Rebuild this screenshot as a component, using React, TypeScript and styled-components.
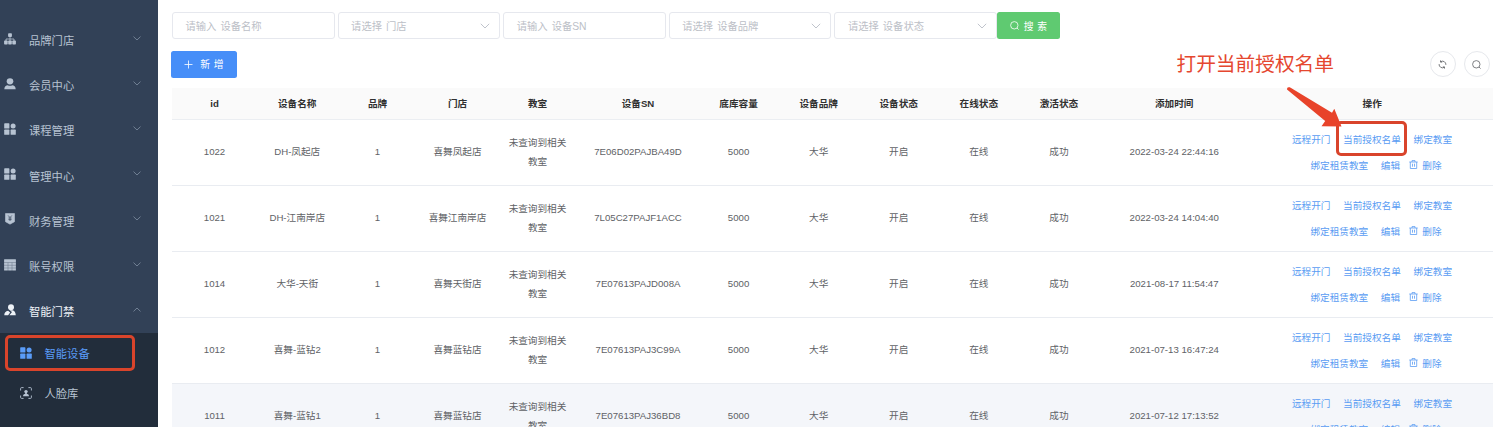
import React from 'react';
import styled, { createGlobalStyle, css } from 'styled-components';

const Global = createGlobalStyle`
  * { box-sizing: border-box; }
  body {
    margin: 0;
    background: #fff;
    overflow: hidden;
    font-family: "Liberation Sans", "Noto Sans CJK SC", sans-serif;
  }
`;

const Page = styled.div`
  position: relative;
  display: flex;
  width: 1500px;
  height: 427px;
  overflow: hidden;
`;

const Sidebar = styled.nav`
  width: 158px;
  flex: none;
  padding-top: 16.5px;
  background: #324157;
  display: flex;
  flex-direction: column;
`;

const MenuItem = styled.div<{ $open?: boolean }>`
  display: flex;
  align-items: center;
  height: 45.2px;
  flex: none;
  padding: 0 17px 0 4px;
  font-size: 11.3px;
  color: ${(p) => (p.$open ? '#eef2f7' : '#b7c3d2')};
  & > svg:first-child { margin-top: -1px; }
`;

const MenuLabel = styled.span`
  flex: 1;
  margin-left: 13px;
  padding-top: 2px;
  white-space: nowrap;
`;

const MenuArrow = styled.svg`
  width: 8px;
  height: 5px;
  margin-top: -2px;
  fill: none;
  stroke: #8290a3;
  stroke-width: 0.8;
`;

const SubMenu = styled.div`
  flex: 1;
  background: #222d3b;
`;

const SubItem = styled.div<{ $active?: boolean }>`
  display: flex;
  align-items: center;
  height: 40px;
  padding-left: 20px;
  font-size: 11.3px;
  color: ${(p) => (p.$active ? '#5a9cf8' : '#b7c3d2')};
  & > span { margin-left: 12.5px; padding-top: 1px; }
`;

const Main = styled.main`
  flex: 1;
  padding: 12px 7px 0 14px;
`;

const Filters = styled.div`
  display: flex;
  height: 27px;
`;

const Field = styled.div`
  display: flex;
  align-items: center;
  justify-content: space-between;
  width: 162.6px;
  margin-right: 3px;
  padding: 0 9px 0 12.5px;
  border: 1px solid #e6e8ee;
  border-radius: 3px;
  font-size: 10.3px;
  word-spacing: 1.2px;
  color: #bcc0c7;
  white-space: nowrap;
  svg { width: 10px; height: 6px; fill: none; stroke: #c0c4cc; }
`;

const Button = styled.button<{ $tone: 'green' | 'blue' }>`
  display: flex;
  align-items: center;
  justify-content: center;
  height: 27px;
  padding: 0;
  border: 0;
  border-radius: 2.5px;
  color: #fff;
  font: inherit;
  font-size: 9.8px;
  word-spacing: 1px;
  ${(p) =>
    p.$tone === 'green'
      ? css`width: 63px; margin-left: -3px; background: #5fca71; gap: 5px;`
      : css`width: 66px; margin-left: -1px; background: #468ef8; gap: 7px;`}
`;

const Toolbar = styled.div`
  display: flex;
  justify-content: space-between;
  align-items: center;
  height: 27px;
  margin-top: 11.5px;
`;

const Tools = styled.div`
  display: flex;
  gap: 8px;
  margin-right: 3.5px;
`;

const RoundButton = styled.span`
  display: flex;
  align-items: center;
  justify-content: center;
  width: 26px;
  height: 26px;
  border: 1px solid #e6e8ec;
  border-radius: 50%;
`;

const Grid = css`
  display: grid;
  grid-template-columns: 85px 80.5px repeat(3, 80px) 121px repeat(5, 80.1px) 150.5px 1fr;
  align-items: center;
  text-align: center;
`;

const Table = styled.div`
  width: 1321px;
  margin-top: 10.5px;
  font-size: 9.65px;
  color: #606266;
`;

const HeadRow = styled.div`
  ${Grid}
  height: 32px;
  padding-top: 1px;
  background: #fafafa;
  border-bottom: 1px solid #ebeef2;
  color: #303030;
  font-weight: 700;
  & > :last-child { padding-left: 2px; }
`;

const Row = styled.div<{ $hover?: boolean }>`
  ${Grid}
  height: 66px;
  border-bottom: 1px solid #e9ecf1;
  background: ${(p) => (p.$hover ? '#f4f6fa' : '#fff')};
`;

const Cell = styled.div`
  padding: 0 10px;
  line-height: 18.5px;
`;

const NoWrapCell = styled(Cell)`
  padding: 0;
  white-space: nowrap;
`;

const Actions = styled.div`
  display: flex;
  flex-direction: column;
  padding-bottom: 2px;
  color: #5a9cf3;
  white-space: nowrap;
`;

const ActionLine = styled.div<{ $gap: number; $shift: number }>`
  display: flex;
  justify-content: center;
  align-items: center;
  height: 26px;
  gap: ${(p) => p.$gap}px;
  padding-left: ${(p) => p.$shift}px;
`;

const Delete = styled.span`
  display: flex;
  align-items: center;
  gap: 4.5px;
  margin-left: -4px;
`;

const Highlight = styled.div<{ $x: number; $y: number; $w: number; $h: number }>`
  position: absolute;
  left: ${(p) => p.$x}px;
  top: ${(p) => p.$y}px;
  width: ${(p) => p.$w}px;
  height: ${(p) => p.$h}px;
  border: 3px solid #d9442b;
  border-radius: 5px;
`;

const Note = styled.div`
  position: absolute;
  left: 1176.5px;
  top: 50px;
  font-size: 19.7px;
  line-height: 28px;
  color: #e5472f;
  white-space: nowrap;
`;

const Arrow = styled.svg`
  position: absolute;
  left: 1280px;
  top: 80px;
`;

const Down = () => (
  <MenuArrow viewBox="0 0 8 5"><path d="M.5.6 4 4 7.5.6" /></MenuArrow>
);
const Up = () => (
  <MenuArrow viewBox="0 0 8 5"><path d="M.5 4.4 4 1l3.5 3.4" /></MenuArrow>
);
const Chevron = () => (
  <svg viewBox="0 0 10 6"><path d="M.8.8 5 5 9.2.8" /></svg>
);

const iconPaths: Record<string, React.ReactNode> = {
  tree: (
    <>
      <rect x="4.1" y="0.3" width="3.8" height="3.8" rx="0.8" />
      <path d="M6 3.5v5M2 8.5V6h8v2.5" fill="none" stroke="currentColor" strokeWidth="0.8" />
      <rect x="0.1" y="7.6" width="3.6" height="3.8" rx="0.7" />
      <rect x="4.2" y="7.6" width="3.6" height="3.8" rx="0.7" />
      <rect x="8.3" y="7.6" width="3.6" height="3.8" rx="0.7" />
    </>
  ),
  user: (
    <>
      <ellipse cx="6" cy="3.3" rx="3.3" ry="3.1" />
      <path d="M.3 11.3C.3 8.6 2 7.3 3.7 7.2q1.1.5 2.3.5t2.3-.5c1.7.1 3.4 1.4 3.4 4.1z" />
    </>
  ),
  grid: (
    <>
      <rect x="0.2" y="0.3" width="5.2" height="5.2" rx="0.6" />
      <circle cx="9.1" cy="2.9" r="2.5" />
      <rect x="0.2" y="6.6" width="5.2" height="5.2" rx="0.6" />
      <rect x="6.6" y="6.6" width="5.2" height="5.2" rx="0.6" />
    </>
  ),
  money: (
    <>
      <path d="M1.5.5h9v8.2L6 11.2 1.5 8.7z" stroke="currentColor" strokeLinejoin="round" strokeWidth="0.6" />
      <path d="M4.2 2.5 6 4.6l1.8-2.1M6 5v3M4.4 5h3.2M4.4 6.6h3.2" fill="none" stroke="#324157" strokeWidth="0.7" />
    </>
  ),
  table: (
    <>
      <rect x="0.1" y="0.2" width="11.8" height="11.4" rx="0.4" />
      <path d="M0 3.5h12M0 6.3h12M0 9h12M4 3.5V12M8 3.5V12" stroke="#324157" strokeWidth="0.5" opacity="0.6" />
    </>
  ),
  door: (
    <>
      <circle cx="7" cy="3.3" r="3" />
      <path d="M5.5 6.3h3c1.9.6 3.1 2 3.3 4.9H5.4L8 8z" />
      <path d="M.3 11.2c0-2.4 1.3-4.2 3.8-4.4L6.2 8.4l-2.1 2.8z" />
    </>
  ),
  face: (
    <>
      <path d="M.6 3.5V1.6q0-1 1-1h2M8.400.6h2q1 0 1 1v1.9M11.4 8.5v1.9q0 1-1 1h-2M3.6 11.4h-2q-1 0-1-1V8.5" fill="none" stroke="currentColor" strokeWidth="0.9" />
      <circle cx="6" cy="4.6" r="1.7" />
      <path d="M2.9 9.2q.2-2.2 2.3-2.5V5.5h1.6v1.2q2.1.3 2.3 2.5z" />
    </>
  ),
};

const Icon = ({ name, size = 12 }: { name: string; size?: number }) => (
  <svg width={size} height={size} viewBox="0 0 12 12" fill="currentColor">{iconPaths[name]}</svg>
);

const SearchIcon = ({ color }: { color: string }) => (
  <svg width="9" height="9" viewBox="0 0 9 9" fill="none" stroke={color} strokeWidth="0.8">
    <circle cx="4.3" cy="4.3" r="3.7" />
    <path d="m7 7 1.6 1.6" />
  </svg>
);

const RefreshIcon = () => (
  <svg width="9" height="9" viewBox="0 0 9 9" fill="none" stroke="#606266" strokeWidth="0.85">
    <path d="M2.7 1.7A3.4 3.4 0 0 1 7.9 4.9M6.3 7.3A3.4 3.4 0 0 1 1.1 4.1" />
    <path d="M2.5.4v1.7h1.7M6.5 8.6V6.9H4.8" />
  </svg>
);

const TrashIcon = () => (
  <svg width="9" height="9" viewBox="0 0 9 9" fill="none" stroke="currentColor" strokeWidth="0.8">
    <path d="M.3 2h8.4M3 2V.6h3V2M1.3 2v6.5h6.4V2M3.5 3.7v3M5.5 3.7v3" />
  </svg>
);

const menu = [
  ['tree', '品牌门店'],
  ['user', '会员中心'],
  ['grid', '课程管理'],
  ['grid', '管理中心'],
  ['money', '财务管理'],
  ['table', '账号权限'],
];

const filters = [
  { text: '请输入 设备名称' },
  { text: '请选择 门店', select: true },
  { text: '请输入 设备SN' },
  { text: '请选择 设备品牌', select: true },
  { text: '请选择 设备状态', select: true },
];

const heads = ['id', '设备名称', '品牌', '门店', '教室', '设备SN', '底库容量', '设备品牌', '设备状态', '在线状态', '激活状态', '添加时间', '操作'];

const devices = [
  ['1022', 'DH-凤起店', '喜舞凤起店', '7E06D02PAJBA49D', '2022-03-24 22:44:16'],
  ['1021', 'DH-江南岸店', '喜舞江南岸店', '7L05C27PAJF1ACC', '2022-03-24 14:04:40'],
  ['1014', '大华-天街', '喜舞天街店', '7E07613PAJD008A', '2021-08-17 11:54:47'],
  ['1012', '喜舞-蓝钻2', '喜舞蓝钻店', '7E07613PAJ3C99A', '2021-07-13 16:47:24'],
  ['1011', '喜舞-蓝钻1', '喜舞蓝钻店', '7E07613PAJ36BD8', '2021-07-12 17:13:52'],
];

export default function App() {
  return (
    <Page>
      <Global />
      <Sidebar>
        {menu.map(([icon, label]) => (
          <MenuItem key={label}>
            <Icon name={icon} />
            <MenuLabel>{label}</MenuLabel>
            <Down />
          </MenuItem>
        ))}
        <MenuItem $open>
          <Icon name="door" />
          <MenuLabel>智能门禁</MenuLabel>
          <Up />
        </MenuItem>
        <SubMenu>
          <SubItem $active><Icon name="grid" /><span>智能设备</span></SubItem>
          <SubItem><Icon name="face" /><span>人脸库</span></SubItem>
        </SubMenu>
      </Sidebar>
      <Main>
        <Filters>
          {filters.map((f) => (
            <Field key={f.text}>{f.text}{f.select && <Chevron />}</Field>
          ))}
          <Button $tone="green"><SearchIcon color="#fff" />搜 索</Button>
        </Filters>
        <Toolbar>
          <Button $tone="blue">
            <svg width="9" height="9" viewBox="0 0 9 9" stroke="#fff" strokeWidth="0.8"><path d="M.5 4.5h8M4.500.5v8" /></svg>
            新 增
          </Button>
          <Tools>
            <RoundButton><RefreshIcon /></RoundButton>
            <RoundButton><SearchIcon color="#606266" /></RoundButton>
          </Tools>
        </Toolbar>
        <Table>
          <HeadRow>{heads.map((h) => <NoWrapCell key={h}>{h}</NoWrapCell>)}</HeadRow>
          {devices.map(([id, name, store, sn, time], i) => (
            <Row key={id} $hover={i === 4}>
              <NoWrapCell>{id}</NoWrapCell>
              <NoWrapCell>{name}</NoWrapCell>
              <NoWrapCell>1</NoWrapCell>
              <NoWrapCell>{store}</NoWrapCell>
              <Cell>未查询到相关教室</Cell>
              <NoWrapCell>{sn}</NoWrapCell>
              <NoWrapCell>5000</NoWrapCell>
              <NoWrapCell>大华</NoWrapCell>
              <NoWrapCell>开启</NoWrapCell>
              <NoWrapCell>在线</NoWrapCell>
              <NoWrapCell>成功</NoWrapCell>
              <NoWrapCell>{time}</NoWrapCell>
              <Actions>
                <ActionLine $gap={12.7} $shift={1.5}>
                  <span>远程开门</span><span>当前授权名单</span><span>绑定教室</span>
                </ActionLine>
                <ActionLine $gap={12.7} $shift={9.5}>
                  <span>绑定租赁教室</span><span>编辑</span><Delete><TrashIcon />删除</Delete>
                </ActionLine>
              </Actions>
            </Row>
          ))}
        </Table>
      </Main>
      <Highlight $x={5} $y={334.5} $w={130} $h={36.5} />
      <Highlight $x={1336} $y={121} $w={70.5} $h={34.5} />
      <Note>打开当前授权名单</Note>
      <Arrow width="66" height="52" viewBox="0 0 66 52" fill="#e8432a">
        <path d="M7 9.5Q6.7 6.500 9.800 7.300L52 32.800 54.300 28.800 61.500 46.500 41.500 46.200 45.200 41Z" />
      </Arrow>
    </Page>
  );
}
